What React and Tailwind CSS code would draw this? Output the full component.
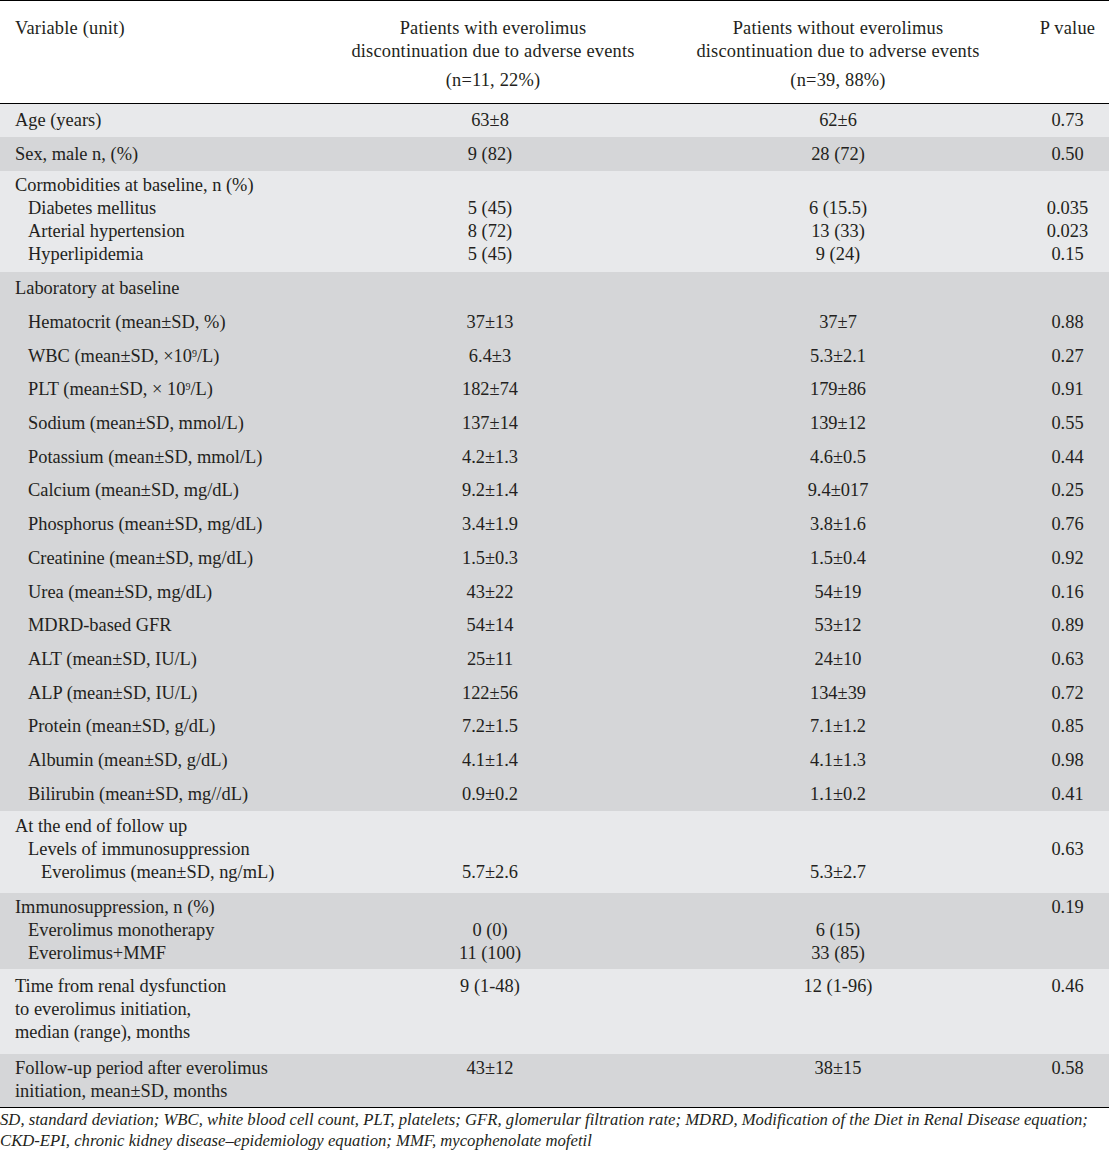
import React from "react";

const LIGHT = "bg-[#e8e9eb]";
const DARK = "bg-[#d5d6d8]";

const indentClass = {
  0: "pl-[15px]",
  1: "pl-[28px]",
  2: "pl-[41px]",
};

// each section: background, padding, row height, rows
const sections = [
  {
    bg: LIGHT,
    pad: "",
    rowH: "h-[33px]",
    rows: [{ label: "Age (years)", a: "63±8", b: "62±6", p: "0.73" }],
  },
  {
    bg: DARK,
    pad: "",
    rowH: "h-[34px]",
    rows: [{ label: "Sex, male n, (%)", a: "9 (82)", b: "28 (72)", p: "0.50" }],
  },
  {
    bg: LIGHT,
    pad: "pt-[3px] pb-[6px]",
    rowH: "h-[23px]",
    rows: [
      { label: "Cormobidities at baseline, n (%)" },
      { label: "Diabetes mellitus", indent: 1, a: "5 (45)", b: "6 (15.5)", p: "0.035" },
      { label: "Arterial hypertension", indent: 1, a: "8 (72)", b: "13 (33)", p: "0.023" },
      { label: "Hyperlipidemia", indent: 1, a: "5 (45)", b: "9 (24)", p: "0.15" },
    ],
  },
  {
    bg: DARK,
    pad: "",
    rowH: "h-[33.7px]",
    rows: [
      { label: "Laboratory at baseline" },
      { label: "Hematocrit (mean±SD, %)", indent: 1, a: "37±13", b: "37±7", p: "0.88" },
      { label: <>WBC (mean±SD, ×10<sup className="text-[10px]">9</sup>/L)</>, indent: 1, a: "6.4±3", b: "5.3±2.1", p: "0.27" },
      { label: <>PLT (mean±SD, × 10<sup className="text-[10px]">9</sup>/L)</>, indent: 1, a: "182±74", b: "179±86", p: "0.91" },
      { label: "Sodium (mean±SD, mmol/L)", indent: 1, a: "137±14", b: "139±12", p: "0.55" },
      { label: "Potassium (mean±SD, mmol/L)", indent: 1, a: "4.2±1.3", b: "4.6±0.5", p: "0.44" },
      { label: "Calcium (mean±SD, mg/dL)", indent: 1, a: "9.2±1.4", b: "9.4±017", p: "0.25" },
      { label: "Phosphorus (mean±SD, mg/dL)", indent: 1, a: "3.4±1.9", b: "3.8±1.6", p: "0.76" },
      { label: "Creatinine (mean±SD, mg/dL)", indent: 1, a: "1.5±0.3", b: "1.5±0.4", p: "0.92" },
      { label: "Urea (mean±SD, mg/dL)", indent: 1, a: "43±22", b: "54±19", p: "0.16" },
      { label: "MDRD-based GFR", indent: 1, a: "54±14", b: "53±12", p: "0.89" },
      { label: "ALT (mean±SD, IU/L)", indent: 1, a: "25±11", b: "24±10", p: "0.63" },
      { label: "ALP (mean±SD, IU/L)", indent: 1, a: "122±56", b: "134±39", p: "0.72" },
      { label: "Protein (mean±SD, g/dL)", indent: 1, a: "7.2±1.5", b: "7.1±1.2", p: "0.85" },
      { label: "Albumin (mean±SD, g/dL)", indent: 1, a: "4.1±1.4", b: "4.1±1.3", p: "0.98" },
      { label: "Bilirubin (mean±SD, mg//dL)", indent: 1, a: "0.9±0.2", b: "1.1±0.2", p: "0.41" },
    ],
  },
  {
    bg: LIGHT,
    pad: "pt-[4px] pb-[9px]",
    rowH: "h-[23px]",
    rows: [
      { label: "At the end of follow up" },
      { label: "Levels of immunosuppression", indent: 1, p: "0.63" },
      { label: "Everolimus (mean±SD, ng/mL)", indent: 2, a: "5.7±2.6", b: "5.3±2.7" },
    ],
  },
  {
    bg: DARK,
    pad: "pt-[3px] pb-[4px]",
    rowH: "h-[23px]",
    rows: [
      { label: "Immunosuppression, n (%)", p: "0.19" },
      { label: "Everolimus monotherapy", indent: 1, a: "0 (0)", b: "6 (15)" },
      { label: "Everolimus+MMF", indent: 1, a: "11 (100)", b: "33 (85)" },
    ],
  },
  {
    bg: LIGHT,
    pad: "pt-[6px] pb-[10px]",
    rowH: "h-[23px]",
    rows: [
      { label: "Time from renal dysfunction", a: "9 (1-48)", b: "12 (1-96)", p: "0.46" },
      { label: "to everolimus initiation," },
      { label: "median (range), months" },
    ],
  },
  {
    bg: DARK,
    pad: "pt-[3px] pb-[4px]",
    rowH: "h-[23px]",
    rows: [
      { label: "Follow-up period after everolimus", a: "43±12", b: "38±15", p: "0.58" },
      { label: "initiation, mean±SD, months" },
    ],
  },
];

const Row = ({ row, rowH }) => (
  <div className={`grid grid-cols-[330px_320px_376px_83px] items-center ${rowH}`}>
    <div className={`${indentClass[row.indent || 0]} whitespace-nowrap`}>{row.label}</div>
    <div className="text-center">{row.a}</div>
    <div className="text-center">{row.b}</div>
    <div className="text-center">{row.p}</div>
  </div>
);

const App = () => {
  return (
    <div className="w-[1111px] bg-white text-[#231f20] font-['Liberation_Serif',serif] text-[18.4px] leading-[23px]">
      <div className="border-t border-black mr-[2px]">
        <div className="grid grid-cols-[330px_320px_376px_83px] pt-[16px] pb-[11px] border-b border-black tracking-[0.2px]">
          <div className="pl-[15px]">Variable (unit)</div>
          <div className="text-center whitespace-nowrap pl-[6px]">
            Patients with everolimus
            <br />
            discontinuation due to adverse events
            <div className="mt-[6px]">(n=11, 22%)</div>
          </div>
          <div className="text-center whitespace-nowrap">
            Patients without everolimus
            <br />
            discontinuation due to adverse events
            <div className="mt-[6px]">(n=39, 88%)</div>
          </div>
          <div className="text-center">P value</div>
        </div>

        {sections.map((section, i) => (
          <div key={i} className={`${section.bg} ${section.pad}`}>
            {section.rows.map((row, j) => (
              <Row key={j} row={row} rowH={section.rowH} />
            ))}
          </div>
        ))}

        <div className="border-t border-black pt-[1px] italic text-[16.7px] leading-[21px] whitespace-nowrap">
          SD, standard deviation; WBC, white blood cell count, PLT, platelets; GFR, glomerular filtration rate; MDRD, Modification of the Diet in Renal Disease equation;
          <br />
          CKD-EPI, chronic kidney disease–epidemiology equation; MMF, mycophenolate mofetil
        </div>
      </div>
    </div>
  );
};

export default App;
